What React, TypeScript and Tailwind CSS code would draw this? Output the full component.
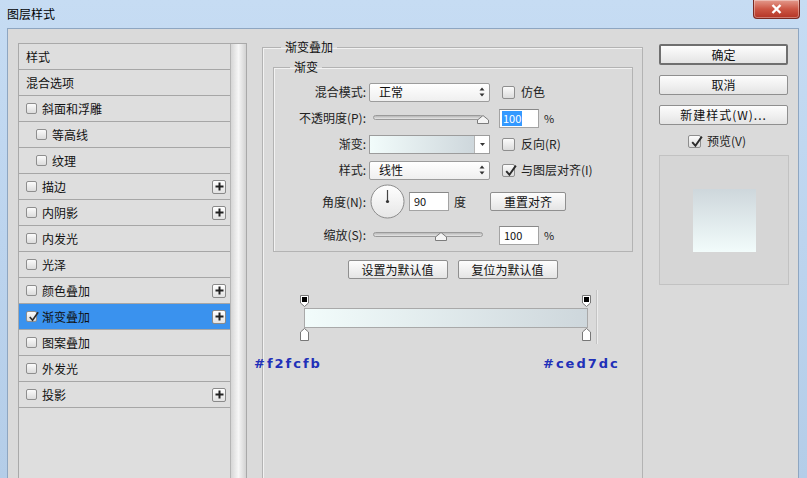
import React from "react";

const cn = "font-['Noto_Sans_CJK_SC','Microsoft_YaHei',sans-serif]";

type Item = { t: string; cb?: boolean; checked?: boolean; plus?: boolean; indent?: boolean; active?: boolean };

const items: Item[] = [
  { t: "样式" },
  { t: "混合选项" },
  { t: "斜面和浮雕", cb: true },
  { t: "等高线", cb: true, indent: true },
  { t: "纹理", cb: true, indent: true },
  { t: "描边", cb: true, plus: true },
  { t: "内阴影", cb: true, plus: true },
  { t: "内发光", cb: true },
  { t: "光泽", cb: true },
  { t: "颜色叠加", cb: true, plus: true },
  { t: "渐变叠加", cb: true, checked: true, plus: true, active: true },
  { t: "图案叠加", cb: true },
  { t: "外发光", cb: true },
  { t: "投影", cb: true, plus: true },
];

const Check = ({ size = 11, checked = false }: { size?: number; checked?: boolean }) => (
  <span
    className="relative inline-flex shrink-0 items-center justify-center rounded-[2px] border border-[#8e8e8e] bg-gradient-to-b from-[#fbfbfb] to-[#dcdcdc]"
    style={{ width: size, height: size }}
  >
    {checked && (
      <svg width={size + 2} height={size + 2} viewBox="0 0 14 14" className="absolute -top-[2px] left-0">
        <path d="M3 7.5 L6 11 L12 2.5" fill="none" stroke="#2b2b2b" strokeWidth="1.8" />
      </svg>
    )}
  </span>
);

const Plus = () => (
  <span className="flex h-[14px] w-[14px] items-center justify-center rounded-[2px] border border-[#8a8a8a] bg-gradient-to-b from-white to-[#e2e2e2]">
    <svg width="9" height="9" viewBox="0 0 9 9">
      <path d="M4.5 0.5 V8.5 M0.5 4.5 H8.5" stroke="#222" strokeWidth="2" />
    </svg>
  </span>
);

const Updown = () => (
  <svg width="6" height="10" viewBox="0 0 6 10">
    <path d="M3 0.5 L5.5 3.5 H0.5 Z M3 9.5 L5.5 6.5 H0.5 Z" fill="#333" />
  </svg>
);

const Select = ({ v }: { v: string }) => (
  <div className="flex h-[19px] w-[121px] items-center justify-between rounded-[2px] border border-[#9c9c9c] bg-gradient-to-b from-white to-[#efefef] pl-[9px] pr-[4px] text-[12px] text-[#111]">
    <span>{v}</span>
    <Updown />
  </div>
);

const Slider = ({ pos }: { pos: number }) => (
  <div className="relative h-[19px] w-[121px]">
    <div className="absolute left-[4px] top-[6px] h-[5px] w-[110px] rounded-full border border-[#9a9a9a] bg-gradient-to-b from-[#b8b8b8] to-[#e6e6e6]" />
    <svg width="12" height="9" viewBox="0 0 12 9" className="absolute top-[6px]" style={{ left: pos - 6 }}>
      <path d="M6 0.5 L11.5 5 V8.5 H0.5 V5 Z" fill="#f4f4f4" stroke="#7c7c7c" />
    </svg>
  </div>
);

const Input = ({ v, sel = false }: { v: string; sel?: boolean }) => (
  <div className="flex h-[19px] w-[40px] items-center border border-[#a3a3a3] border-t-[#888] bg-white pl-[2px] text-[11px] text-[#111]">
    <span className={sel ? "bg-[#3399ff] px-[1px] leading-[15px] text-white" : "pl-[2px]"}>{v}</span>
  </div>
);

const Btn = ({ t, w, def = false }: { t: string; w: string; def?: boolean }) => (
  <div
    className={`flex items-center justify-center rounded-[2px] bg-gradient-to-b from-[#fdfdfd] to-[#e4e4e4] text-[12px] text-[#111] ${w} ${
      def ? "border-2 border-[#6f6f6f]" : "border border-[#8f8f8f]"
    }`}
  >
    {t}
  </div>
);

const Row = ({ label, children }: { label: string; children: React.ReactNode }) => (
  <div className="flex h-[26px] items-center">
    <div className="w-[92px] text-right text-[12px] text-[#222]">{label}</div>
    <div className="ml-[3px] flex items-center">{children}</div>
  </div>
);

const TopStop = () => (
  <svg width="9" height="12" viewBox="0 0 9 12">
    <path d="M0.5 0.5 H8.5 V8 L4.5 11.5 L0.5 8 Z" fill="#fff" stroke="#777" />
    <rect x="2" y="2" width="5" height="5" fill="#000" />
  </svg>
);

const BottomStop = () => (
  <svg width="9" height="13" viewBox="0 0 9 13">
    <path d="M4.5 0.5 L8.5 4 V12.5 H0.5 V4 Z" fill="#fff" stroke="#777" />
  </svg>
);

export default function App() {
  return (
    <div className={`relative flex h-[478px] w-[807px] flex-col overflow-hidden bg-gradient-to-b from-[#c6dcf3] via-[#bcd4ee] to-[#b4cde8] ${cn}`}>
      {/* title bar */}
      <div className="flex h-[28px] shrink-0 items-center pl-[7px] text-[12px] text-black">图层样式</div>
      <div className="absolute right-[7px] top-0 flex h-[19px] w-[47px] items-center justify-center rounded-b-[4px] border border-t-0 border-[#7a2a22] bg-gradient-to-b from-[#e39a8d] via-[#cc5645] to-[#b33324] shadow-[inset_0_0_0_1px_rgba(255,255,255,0.35)]">
        <svg width="11" height="10" viewBox="0 0 11 10">
          <path d="M1.5 1 L9.5 9 M9.5 1 L1.5 9" stroke="#fff" strokeWidth="2.4" />
        </svg>
      </div>

      {/* content */}
      <div className="ml-[7px] mr-[8px] flex flex-1 border border-b-0 border-[#8ea6c1] bg-[#dadada]">
        {/* left list */}
        <div className="ml-[10px] mt-[14px] flex w-[229px] border border-b-0 border-[#a9a9a9]">
          <div className="w-[212px] bg-[#dedede]">
            {items.map((it) => (
              <div
                key={it.t}
                className={`flex h-[26px] items-center border-b border-[#a6a6a6] pr-[4px] text-[12px] text-[#111] ${
                  it.active ? "bg-[#3a92ee]" : ""
                } ${it.indent ? "pl-[17px]" : "pl-[7px]"}`}
              >
                {it.cb && <Check checked={it.checked} />}
                <span className={it.cb ? "ml-[5px]" : ""}>{it.t}</span>
                <span className="flex-1" />
                {it.plus && <Plus />}
              </div>
            ))}
          </div>
          <div className="w-[16px] border-l border-[#b5b5b5] bg-gradient-to-r from-[#d6d6d6] via-[#f6f6f6] to-[#d2d2d2]" />
        </div>

        {/* middle */}
        <fieldset className="ml-[15px] mt-[11px] h-[480px] w-[381px] border border-[#b3b3b3] shadow-[inset_1px_1px_0_#f2f2f2]">
          <legend className="ml-[18px] px-[4px] text-[12px] leading-[14px] text-[#111]">渐变叠加</legend>
          <fieldset className="ml-[10px] mt-[6px] h-[192px] w-[360px] border border-[#b3b3b3] shadow-[inset_1px_1px_0_#f2f2f2]">
            <legend className="ml-[16px] px-[4px] text-[12px] leading-[14px] text-[#111]">渐变</legend>
            <div className="flex flex-col pt-[5px]">
              <Row label="混合模式:">
                <Select v="正常" />
                <span className="ml-[12px]"><Check size={13} /></span>
                <span className="ml-[6px] text-[12px] text-[#222]">仿色</span>
              </Row>
              <Row label="不透明度(P):">
                <Slider pos={114} />
                <span className="ml-[9px]"><Input v="100" sel /></span>
                <span className="ml-[5px] text-[11px] text-[#222]">%</span>
              </Row>
              <Row label="渐变:">
                <div className="flex h-[19px] w-[121px] border border-[#9c9c9c] bg-white">
                  <div className="w-[104px] bg-gradient-to-r from-[#f2fcfb] to-[#ced7dc]" />
                  <div className="flex flex-1 items-center justify-center border-l border-[#b5b5b5]">
                    <svg width="5" height="3" viewBox="0 0 5 3"><path d="M0 0 H5 L2.5 3 Z" fill="#333" /></svg>
                  </div>
                </div>
                <span className="ml-[12px]"><Check size={13} /></span>
                <span className="ml-[6px] text-[12px] text-[#222]">反向(R)</span>
              </Row>
              <Row label="样式:">
                <Select v="线性" />
                <span className="ml-[12px]"><Check size={13} checked /></span>
                <span className="ml-[6px] text-[12px] text-[#222]">与图层对齐(I)</span>
              </Row>
              <div className="flex h-[37px] items-center">
                <div className="w-[92px] text-right text-[12px] text-[#222]">角度(N):</div>
                <div className="ml-[4px] flex items-center">
                  <svg width="35" height="35" viewBox="0 0 35 35">
                    <defs>
                      <linearGradient id="dial" x1="0" y1="0" x2="0" y2="1">
                        <stop offset="0" stopColor="#ffffff" />
                        <stop offset="1" stopColor="#e6e6e6" />
                      </linearGradient>
                    </defs>
                    <circle cx="17.5" cy="17.5" r="16.5" fill="url(#dial)" stroke="#8b8b8b" />
                    <path d="M17.5 6 V17.5" stroke="#444" strokeWidth="1.2" />
                    <circle cx="17.5" cy="17.5" r="1.6" fill="#333" />
                  </svg>
                  <span className="ml-[4px]"><Input v="90" /></span>
                  <span className="w-[41px] pl-[5px] text-[12px] text-[#222]">度</span>
                  <Btn t="重置对齐" w="h-[19px] w-[76px]" />
                </div>
              </div>
              <div className="flex h-[30px] items-center">
                <div className="w-[92px] text-right text-[12px] text-[#222]">缩放(S):</div>
                <div className="ml-[3px] flex items-center">
                  <Slider pos={72} />
                  <span className="ml-[9px]"><Input v="100" /></span>
                  <span className="ml-[5px] text-[11px] text-[#222]">%</span>
                </div>
              </div>
            </div>
          </fieldset>
          <div className="mt-[8px] flex justify-center gap-[10px]">
            <Btn t="设置为默认值" w="h-[19px] w-[100px]" />
            <Btn t="复位为默认值" w="h-[19px] w-[100px]" />
          </div>
          <div className="relative ml-[37px] mt-[11px] h-[54px] w-[298px]">
            <div className="absolute left-0 top-[5px]"><TopStop /></div>
            <div className="absolute left-[282px] top-[5px]"><TopStop /></div>
            <div className="absolute left-[4px] top-[18px] h-[20px] w-[284px] border border-[#a9a9a9] bg-gradient-to-r from-[#f2fcfb] to-[#ced7dc]" />
            <div className="absolute left-0 top-[38px]"><BottomStop /></div>
            <div className="absolute left-[282px] top-[38px]"><BottomStop /></div>
            <div className="absolute left-[296px] top-0 h-[54px] w-[2px] border-l border-[#c4c4c4] bg-[#ececec]" />
          </div>
        </fieldset>

        {/* right */}
        <div className="ml-[16px] mt-[15px] flex w-[129px] flex-col">
          <Btn t="确定" w="h-[21px] w-[129px]" def />
          <div className="mt-[10px]"><Btn t="取消" w="h-[20px] w-[129px]" /></div>
          <div className="mt-[10px]"><Btn t="新建样式(W)..." w="h-[20px] w-[129px] tracking-[1px]" /></div>
          <div className="mt-[7px] flex items-center pl-[29px]">
            <Check size={13} checked />
            <span className="ml-[6px] text-[12px] text-[#222]">预览(V)</span>
          </div>
          <div className="mt-[5px] flex h-[130px] w-[130px] items-center justify-center border border-[#c2c2c2] bg-[#d6d6d6]">
            <div className="h-[63px] w-[63px] bg-gradient-to-b from-[#ced7dc] to-[#f2fcfb]" />
          </div>
        </div>
      </div>

      {/* annotations */}
      <div className="absolute left-[254px] top-[354px] font-['DejaVu_Sans',sans-serif] text-[13px] font-bold tracking-[2px] text-[#2130b8]">#f2fcfb</div>
      <div className="absolute left-[543px] top-[354px] font-['DejaVu_Sans',sans-serif] text-[13px] font-bold tracking-[2px] text-[#2130b8]">#ced7dc</div>
    </div>
  );
}
